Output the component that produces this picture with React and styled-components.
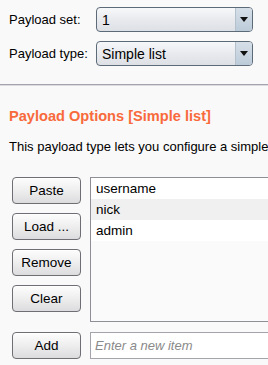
import styled, { createGlobalStyle } from "styled-components";

const Global = createGlobalStyle`
  html, body {
    margin: 0;
    padding: 0;
    background: #f9f9f9;
    overflow: hidden;
  }
  body {
    font-family: "Liberation Sans", Arial, sans-serif;
    font-size: 13px;
    color: #000;
  }
`;

const Page = styled.div`
  width: 268px;
  height: 365px;
  overflow: hidden;
  display: flex;
  flex-direction: column;
`;

const Form = styled.div`
  display: flex;
  flex-direction: column;
  gap: 9px;
  padding: 7px 0 18px 9px;
  border-bottom: 1px solid #a4a4ae;
  box-shadow: 0 1px 0 #dcdce0;
`;

const FieldRow = styled.div`
  display: flex;
  align-items: center;
`;

const Label = styled.label`
  width: 87px;
  flex-shrink: 0;
  font-size: 13px;
`;

const Select = styled.div`
  width: 157px;
  height: 25px;
  box-sizing: border-box;
  display: flex;
  border: 1px solid #5d6a78;
  border-radius: 4px;
  overflow: hidden;
  background: linear-gradient(#f7f8fa, #e8eaee 50%, #dde0e5);
`;

const SelectValue = styled.div`
  flex: 1;
  display: flex;
  align-items: center;
  padding-left: 5px;
  font-size: 14px;
`;

const SelectArrow = styled.div`
  width: 16px;
  border-left: 1px solid #b4c0cc;
  background: linear-gradient(#d6dfe8, #bccbd9);
  display: flex;
  align-items: center;
  justify-content: center;
  &::after {
    content: "";
    border-left: 4px solid transparent;
    border-right: 4px solid transparent;
    border-top: 5px solid #111;
  }
`;

const Heading = styled.h2`
  margin: 0;
  padding: 21px 0 0 9px;
  font-size: 14.6px;
  font-weight: bold;
  color: #f86a3c;
  line-height: 20px;
`;

const Description = styled.p`
  margin: 0;
  padding: 13px 0 0 9px;
  font-size: 13px;
  line-height: 16px;
  white-space: nowrap;
`;

const Body = styled.div`
  display: grid;
  grid-template-columns: 69px 200px;
  column-gap: 9px;
  row-gap: 10px;
  padding: 22px 0 0 12px;
`;

const Buttons = styled.div`
  display: flex;
  flex-direction: column;
  gap: 9px;
`;

const Button = styled.button`
  width: 69px;
  height: 27px;
  box-sizing: border-box;
  border: 1px solid #6e6e74;
  border-radius: 4px;
  background: linear-gradient(#fdfdfd, #eeeeef 50%, #dcdcde);
  font-family: "Liberation Sans", Arial, sans-serif;
  font-size: 13.5px;
  color: #000;
  padding: 0;
  box-shadow: inset 0 1px 0 #fff;
`;

const List = styled.div`
  height: 145px;
  box-sizing: border-box;
  border: 1px solid #8e8e96;
  border-right: none;
  background: #fafafa;
  display: flex;
  flex-direction: column;
`;

const ListItem = styled.div`
  height: 21px;
  display: flex;
  align-items: center;
  padding-left: 5px;
  font-size: 13.5px;
  background: ${(p) => (p.$alt ? "#f0f0f0" : "#fff")};
`;

const Input = styled.input`
  height: 27px;
  box-sizing: border-box;
  border: 1px solid #a4a4ac;
  border-right: none;
  background: #fff;
  padding: 0 0 0 4px;
  font-family: "Liberation Sans", Arial, sans-serif;
  font-size: 13px;
  outline: none;
  &::placeholder {
    color: #8a8a8a;
    font-style: italic;
  }
`;

const items = ["username", "nick", "admin"];

export default function App() {
  return (
    <Page>
      <Global />
      <Form>
        <FieldRow>
          <Label>Payload set:</Label>
          <Select>
            <SelectValue>1</SelectValue>
            <SelectArrow />
          </Select>
        </FieldRow>
        <FieldRow>
          <Label>Payload type:</Label>
          <Select>
            <SelectValue>Simple list</SelectValue>
            <SelectArrow />
          </Select>
        </FieldRow>
      </Form>
      <Heading>Payload Options [Simple list]</Heading>
      <Description>This payload type lets you configure a simple list of strings</Description>
      <Body>
        <Buttons>
          <Button>Paste</Button>
          <Button>Load ...</Button>
          <Button>Remove</Button>
          <Button>Clear</Button>
        </Buttons>
        <List>
          {items.map((it, i) => (
            <ListItem key={it} $alt={i % 2 === 1}>
              {it}
            </ListItem>
          ))}
        </List>
        <Button>Add</Button>
        <Input placeholder="Enter a new item" />
      </Body>
    </Page>
  );
}
